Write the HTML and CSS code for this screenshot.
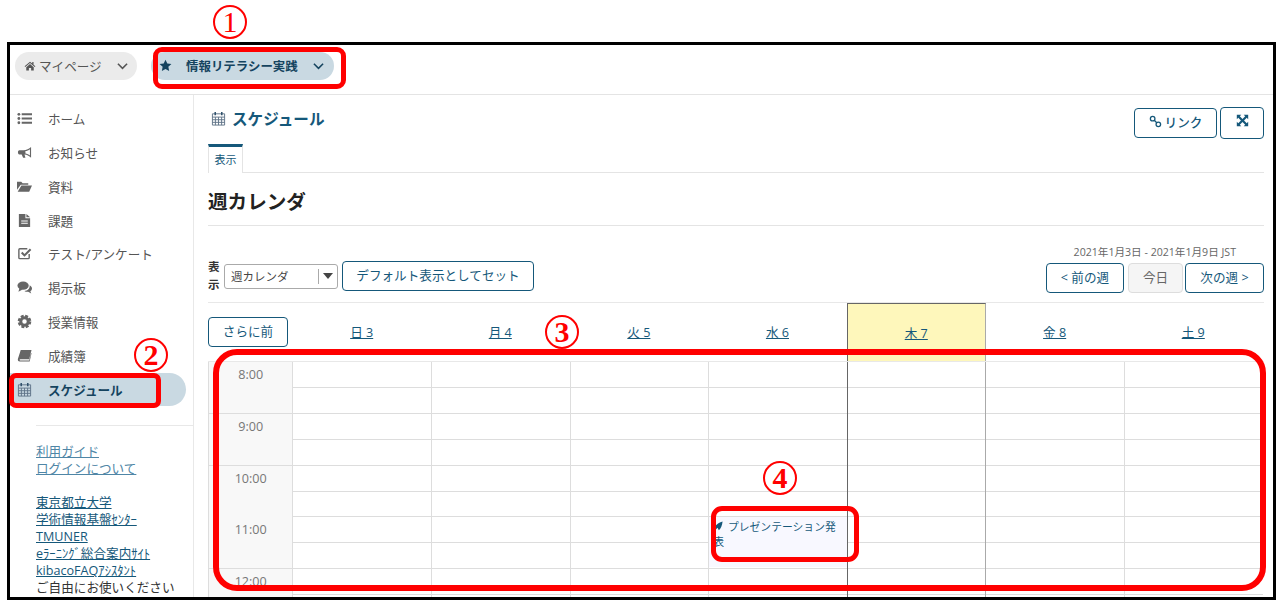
FILE: index.html
```html
<!DOCTYPE html>
<html lang="ja">

<head>
  <title>スケジュール</title>
  <meta charset="utf-8">
  <meta name="viewport" content="width=device-width, initial-scale=1">
  <link rel="stylesheet" href="styles.css">
</head>

<body>
  <div class="frame">

    <!-- top site bar -->
    <header class="topbar">
      <a class="pill pill-home" href="#">
        <svg class="ico-home" viewBox="0 0 16 16"><path d="M8 2.2 .8 8.3l.9 1L8 4l6.300 5.300.9-1-2.500-2.100V2.800H11v1.900zM3 9.600 8 5.400l5 4.200V14H9.500v-3.500h-3V14H3z"/></svg>
        <span>マイページ</span>
        <svg class="chev" viewBox="0 0 12 8"><path d="M1 1.500 6 6.500 11 1.500"/></svg>
      </a>
      <a class="pill pill-course" href="#">
        <svg class="ico-star" viewBox="0 0 16 16"><path d="M8 .8l2.200 4.700 5.100.6-3.800 3.500 1 5.100L8 12.200l-4.500 2.500 1-5.100L.7 6.100l5.100-.6z"/></svg>
        <span>情報リテラシー実践</span>
        <svg class="chev" viewBox="0 0 12 8"><path d="M1 1.500 6 6.500 11 1.500"/></svg>
      </a>
    </header>

    <div class="layout">

      <!-- left menu -->
      <aside class="sidebar">
        <ul class="menu">
          <li><svg viewBox="0 0 16 16"><circle cx="2" cy="3.500" r="1.500"/><circle cx="2" cy="8" r="1.500"/><circle cx="2" cy="12.500" r="1.500"/><path d="M5 2.500h11v2H5zM5 7h11v2H5zM5 11.500h11v2H5z"/></svg>ホーム</li>
          <li><svg viewBox="0 0 16 16"><path fill-rule="evenodd" d="M15 2v11.500c-2-2-4.500-3.200-7-3.500l1 3.500H6.500L5 10H2.500C1.500 10 1 9 1 7.800S1.500 5.500 2.500 5.500H7C10 5.500 13 4 15 2zM13.800 4.500C12.500 5.500 10.500 6.300 9 6.500v2.600c1.700.2 3.500 1 4.800 2z"/></svg>お知らせ</li>
          <li><svg viewBox="0 0 16 16"><path d="M0 3h4.500L6 4.500h6V6H4L0 11.500zM4.700 7H16l-3 6.500H.7z"/></svg>資料</li>
          <li><svg viewBox="0 0 16 16"><path fill-rule="evenodd" d="M2 1h7v4.500h5V15H2zM10 1l4 3.500h-4zM4.500 8v1h7V8zM4.500 10.500v1h7v-1z"/></svg>課題</li>
          <li><svg viewBox="0 0 16 16"><path class="line" d="M13 8.500V12.500a1 1 0 0 1-1 1H3a1 1 0 0 1-1-1V4a1 1 0 0 1 1-1h8"/><path class="line thick" d="M5 7l3 3 6.500-6.500"/></svg>テスト/アンケート</li>
          <li><svg viewBox="0 0 16 16"><ellipse cx="6.500" cy="6" rx="6" ry="4.500"/><path d="M2.500 9 1.500 12.500 6 10z"/><path d="M13.500 5.500c1.500.8 2.500 2 2.500 3.500 0 1.300-.8 2.400-1.800 3l1 2.500-3.300-2c-1.500.2-3-.1-4-.9 3.500-.1 6-2.500 5.600-6.100z"/></svg>掲示板</li>
          <li><svg viewBox="0 0 16 16"><circle class="gear" cx="8" cy="8" r="4"/><circle class="teeth" cx="8" cy="8" r="6"/></svg>授業情報</li>
          <li><svg viewBox="0 0 16 16"><path fill-rule="evenodd" d="M4 2h11.500l-2.500 10H3.500c-.8 0-1 1.200-.1 1.200H13l2-8 .5.500L13.500 14.500H3c-1.700 0-2.500-1.500-2-3z"/></svg>成績簿</li>
          <li class="active"><svg viewBox="0 0 16 16"><use href="#cal"/></svg>スケジュール</li>
        </ul>

        <div class="side-links">
          <a href="#">利用ガイド</a>
          <a href="#">ログインについて</a>
          <div class="gap"></div>
          <a class="dark" href="#">東京都立大学</a>
          <a class="dark" href="#">学術情報基盤ｾﾝﾀｰ</a>
          <a class="dark" href="#">TMUNER</a>
          <a class="dark" href="#">eﾗｰﾆﾝｸﾞ総合案内ｻｲﾄ</a>
          <a class="dark" href="#">kibacoFAQｱｼｽﾀﾝﾄ</a>
          <p>ご自由にお使いください</p>
        </div>
      </aside>

      <!-- schedule -->
      <main class="content">
        <div class="title-row">
          <h1>
            <svg class="ico-cal" viewBox="0 0 16 16">
              <symbol id="cal" viewBox="0 0 16 16">
                <path class="cal-lines" d="M1.500 3h13v12h-13zM1.500 6.500h13M1.500 9.300h13M1.500 12.100h13M4.700 6.500V15M8 6.500V15M11.300 6.500V15"/>
                <path class="cal-rings" d="M4.500 1v3.500M11.500 1v3.500"/>
              </symbol>
              <use href="#cal"/>
            </svg>
            スケジュール
          </h1>
          <div class="title-btns">
            <a class="btn btn-link" href="#">
              <svg class="ico-link" viewBox="0 0 16 16"><circle cx="4.500" cy="4.500" r="2.800"/><circle cx="11.500" cy="11.500" r="2.800"/><path d="M6.500 6.500l3 3"/></svg>
              リンク
            </a>
            <a class="btn btn-expand" href="#" aria-label="expand">
              <svg viewBox="0 0 16 16"><path d="M1 1h5.500L4.700 2.800 8 6.100l3.300-3.300L9.500 1H15v5.500l-1.800-1.800L9.900 8l3.300 3.300 1.800-1.800V15H9.500l1.800-1.800L8 9.900l-3.300 3.300L6.500 15H1V9.500l1.800 1.800L6.100 8 2.800 4.700 1 6.500z"/></svg>
            </a>
          </div>
        </div>

        <div class="tabs"><span class="tab">表示</span></div>

        <h2>週カレンダ</h2>

        <div class="toolbar">
          <div class="view-picker">
            <label>表示</label>
            <div class="select">
              <span>週カレンダ</span>
              <i class="select-arrow"></i>
            </div>
            <a class="btn btn-default" href="#">デフォルト表示としてセット</a>
          </div>
          <div class="week-nav">
            <div class="date-range">2021年1月3日 - 2021年1月9日 JST</div>
            <div class="week-btns">
              <a class="btn btn-prev" href="#">&lt; 前の週</a>
              <a class="btn btn-today" href="#">今日</a>
              <a class="btn btn-next" href="#">次の週 &gt;</a>
            </div>
          </div>
        </div>

        <div class="cal-head">
          <div class="head-first"><a class="btn btn-more" href="#">さらに前</a></div>
          <div class="head-day"><a href="#">日 3</a></div>
          <div class="head-day"><a href="#">月 4</a></div>
          <div class="head-day"><a href="#">火 5</a></div>
          <div class="head-day"><a href="#">水 6</a></div>
          <div class="head-day today"><a href="#">木 7</a></div>
          <div class="head-day"><a href="#">金 8</a></div>
          <div class="head-day"><a href="#">土 9</a></div>
        </div>

        <div class="cal-body">
          <div class="times">
            <div>8:00</div>
            <div>9:00</div>
            <div>10:00</div>
            <div>11:00</div>
            <div>12:00</div>
          </div>
          <div class="day"></div>
          <div class="day"></div>
          <div class="day"></div>
          <div class="day">
            <a class="event" href="#">
              <svg viewBox="0 0 12 12"><path d="M11.500 .5C11 5 9.500 9 7 11L5.500 8 3 10.500 2 7C5 3 8 1.500 11.500 .5Z"/></svg>
              プレゼンテーション発表
            </a>
          </div>
          <div class="day today"></div>
          <div class="day"></div>
          <div class="day"></div>
        </div>
      </main>
    </div>
  </div>

  <!-- red notes drawn on top of the screenshot -->
  <div class="mark mark-1"></div>
  <div class="mark mark-2"></div>
  <div class="mark mark-3"></div>
  <div class="mark mark-4"></div>
  <span class="num num-1">1</span>
  <span class="num num-2">2</span>
  <span class="num num-3">3</span>
  <span class="num num-4">4</span>
</body>

</html>
```

FILE: styles.css
```css
* {
  box-sizing: border-box;
  margin: 0;
}

body {
  position: relative;
  padding: 42px 0 0 7px;
  height: 607px;
  overflow: hidden;
  background-color: white;
  font-family: "Open Sans", "Noto Sans CJK JP", sans-serif;
  font-size: 12.6px;
  color: #555;
}

a {
  color: #15587a;
}

svg {
  fill: currentColor;
  flex: none;
}

.frame {
  width: 1269px;
  height: 558px;
  border: 3px solid black;
  overflow: hidden;
}

/* top bar */
.topbar {
  display: flex;
  align-items: center;
  height: 50px;
  padding-left: 5px;
  padding-bottom: 8px;
  gap: 14px;
  border-bottom: 1px solid #e4e4e4;
}

.pill {
  display: flex;
  align-items: center;
  height: 28px;
  border-radius: 14px;
  text-decoration: none;
}

.pill-home {
  width: 122px;
  padding-left: 9px;
  background-color: #ebebeb;
  color: #555;
}

.pill-home span {
  margin-left: 3px;
}

.ico-home {
  width: 12px;
  height: 12px;
}

.pill-home .chev {
  margin-left: 15px;
}

.pill-course {
  width: 183px;
  padding-left: 8px;
  background-color: #c9d9e2;
  color: #15445f;
  font-weight: bold;
}

.ico-star {
  width: 13px;
  height: 13px;
}

.pill-course span {
  margin-left: 14px;
  font-size: 12.450px;
}

.pill-course .chev {
  margin-left: 15px;
}

.chev {
  width: 11px;
  height: 8px;
  fill: none;
  stroke: currentColor;
  stroke-width: 1.7;
}

.layout {
  display: flex;
}

/* sidebar */
.sidebar {
  flex: none;
  width: 184px;
  height: 510px;
  border-right: 1px solid #e8e8e8;
}

.menu {
  list-style-type: none;
  padding: 6.500px 0 0;
}

.menu li {
  display: flex;
  align-items: center;
  height: 33.875px;
  padding-left: 7px;
  color: #555;
}

.menu svg {
  width: 15px;
  height: 15px;
  margin-right: 16px;
  color: #666;
}

.menu .line {
  fill: none;
  stroke: currentColor;
  stroke-width: 1.500;
}

.menu .thick {
  stroke-width: 2.200;
}

.menu .gear {
  fill: none;
  stroke: currentColor;
  stroke-width: 3.200;
}

.menu .teeth {
  fill: none;
  stroke: currentColor;
  stroke-width: 2.500;
  stroke-dasharray: 3.100 1.610;
}

.menu .active {
  width: 176px;
  border-radius: 0 17px 17px 0;
  background-color: #c9d9e2;
  color: #15445f;
  font-weight: bold;
}

.side-links {
  margin: 18.600px 0 0 26px;
  padding-top: 17px;
  border-top: 1px solid #e8e8e8;
  line-height: 17px;
}

.side-links a {
  display: block;
  width: fit-content;
  color: #4f86a6;
}

.side-links a.dark {
  color: #15587a;
}

.side-links .gap {
  height: 17px;
}

.side-links p {
  color: #333;
}

/* main column */
.content {
  flex: none;
  width: 1079px;
  padding: 0 9px 0 14px;
}

.title-row {
  display: flex;
  align-items: center;
  justify-content: space-between;
  height: 49px;
}

h1 {
  display: flex;
  align-items: center;
  padding-left: 3px;
  margin-bottom: 2px;
  font-size: 15.600px;
  color: #15587a;
}

.ico-cal {
  width: 15px;
  height: 15px;
  margin-right: 6px;
}

.cal-lines {
  fill: none;
  stroke: #5f7388;
  stroke-width: 1;
}

.cal-rings {
  fill: none;
  stroke: #2d4f69;
  stroke-width: 1.600;
}

.menu .active svg {
  color: #15445f;
}

.title-btns {
  display: flex;
  align-items: center;
  gap: 3px;
  margin-top: 7px;
}

.btn {
  display: flex;
  align-items: center;
  justify-content: center;
  height: 30px;
  padding-bottom: 4px;
  border: 1px solid #15587a;
  border-radius: 4px;
  background-color: white;
  color: #15587a;
  text-decoration: none;
  white-space: nowrap;
}

.btn-link {
  width: 83px;
  font-weight: 500;
}

.ico-link {
  width: 13px;
  height: 13px;
  margin-right: 3px;
  fill: none;
  stroke: currentColor;
  stroke-width: 1.600;
}

.btn-expand {
  width: 44px;
  height: 32px;
}

.btn-expand svg {
  width: 13px;
  height: 13px;
  margin-bottom: 2px;
}

.tabs {
  height: 29px;
  border-bottom: 1px solid #e4e4e4;
}

.tab {
  display: block;
  width: 35px;
  height: 29px;
  padding-top: 4px;
  border: 1px solid #e4e4e4;
  border-top: 3px solid #15587a;
  border-bottom: none;
  background-color: white;
  font-size: 11px;
  text-align: center;
  color: #15587a;
}

h2 {
  height: 53px;
  padding-top: 14px;
  border-bottom: 1px solid #e4e4e4;
  font-size: 19.600px;
  line-height: 30px;
  color: #222;
}

.toolbar {
  display: flex;
  align-items: flex-end;
  justify-content: space-between;
  height: 77px;
  padding-bottom: 9px;
  border-bottom: 1px solid #e8e8e8;
}

.view-picker {
  display: flex;
  align-items: center;
  margin-bottom: -1px;
}

.view-picker label {
  width: 12px;
  margin-right: 4px;
  font-size: 11.500px;
  font-weight: bold;
  line-height: 18px;
  color: #333;
}

.select {
  display: flex;
  align-items: center;
  width: 114px;
  height: 25px;
  padding-left: 6px;
  border: 1px solid #aaa;
  border-radius: 3px;
  font-size: 11.500px;
  color: #444;
}

.select span {
  flex: 1;
}

.select-arrow {
  width: 19px;
  height: 15px;
  margin-right: 0;
  border-left: 1px solid #aaa;
  position: relative;
}

.select-arrow::after {
  content: "";
  position: absolute;
  left: 4px;
  top: 4px;
  border-left: 5px solid transparent;
  border-right: 5px solid transparent;
  border-top: 6px solid #444;
}

.btn-default {
  width: 192px;
  margin-left: 4px;
}

.week-nav {
  display: flex;
  flex-direction: column;
  align-items: flex-end;
}

.date-range {
  margin: 0 28px 3px 0;
  font-size: 10.600px;
  line-height: 16px;
  color: #666;
}

.week-btns {
  display: flex;
}

.btn-prev {
  width: 78px;
  margin-right: 4px;
}

.btn-today {
  width: 55px;
  margin-right: 2px;
  border-color: #ddd;
  background-color: #f5f5f5;
  color: #666;
}

.btn-next {
  width: 79px;
}

/* calendar */
.cal-head,
.cal-body {
  display: grid;
  grid-template-columns: 84.400px repeat(7, 138.600px);
}

.cal-head {
  height: 58px;
}

.head-first {
  padding-top: 14px;
}

.btn-more {
  width: 80px;
}

.head-day {
  padding-top: 19px;
  text-align: center;
}

.head-day.today {
  border-top: 1px solid #666;
  border-left: 1px solid #666;
  border-right: 1px solid #aaa;
  background-color: #fef7bb;
  width: 139px;
}

.cal-body {
  height: 240px;
  border-top: 1px solid #e8e8e8;
}

.times {
  border-left: 1px solid #ddd;
  background-color: #f8f8f8;
  text-align: center;
  color: #777;
}

.times div {
  height: 51.800px;
  padding-top: 3px;
  line-height: 19px;
  background: linear-gradient(to bottom, transparent 50.800px, #ddd 50.800px);
}

.day {
  position: relative;
  border-left: 1px solid #ddd;
  background: repeating-linear-gradient(to bottom, transparent 0, transparent 24.900px, #ddd 24.900px, #ddd 25.900px);
}

.day.today {
  border-left-color: #666;
}

.day.today + .day {
  border-left-color: #aaa;
}

/* sits over the time slots, same as a real calendar entry */
.event {
  position: absolute;
  top: 155px;
  left: 0;
  width: 100%;
  height: 50px;
  padding: 2px 10px 2px 4px;
  background-color: #f8f8ff;
  line-height: 15px;
  font-size: 10.800px;
  text-decoration: none;
  word-break: break-all;
}

.event svg {
  width: 10px;
  height: 10px;
  margin-right: 2px;
}

/* red annotations */
.mark {
  position: absolute;
  border: 5px solid #f00;
}

.mark-1 {
  left: 153px;
  top: 47px;
  width: 193px;
  height: 42px;
  border-radius: 9px;
}

.mark-2 {
  left: 9px;
  top: 373px;
  width: 152px;
  height: 35px;
  border-radius: 7px;
}

.mark-3 {
  left: 213px;
  top: 349px;
  width: 1053px;
  height: 242px;
  border-width: 6px;
  border-radius: 24px;
}

.mark-4 {
  left: 711px;
  top: 506px;
  width: 148px;
  height: 56px;
  border-radius: 11px;
}

.num {
  position: absolute;
  display: flex;
  align-items: center;
  justify-content: center;
  width: 34px;
  height: 34px;
  border: 2px solid #f00;
  border-radius: 50%;
  background-color: white;
  font-family: "Liberation Serif", serif;
  font-size: 30px;
  font-weight: bold;
  color: #f00;
}

.num-1 {
  left: 213px;
  top: 5px;
  font-weight: normal;
}

.num-2 {
  left: 134px;
  top: 338px;
}

.num-3 {
  left: 545px;
  top: 315px;
}

.num-4 {
  left: 763px;
  top: 461px;
}
```
